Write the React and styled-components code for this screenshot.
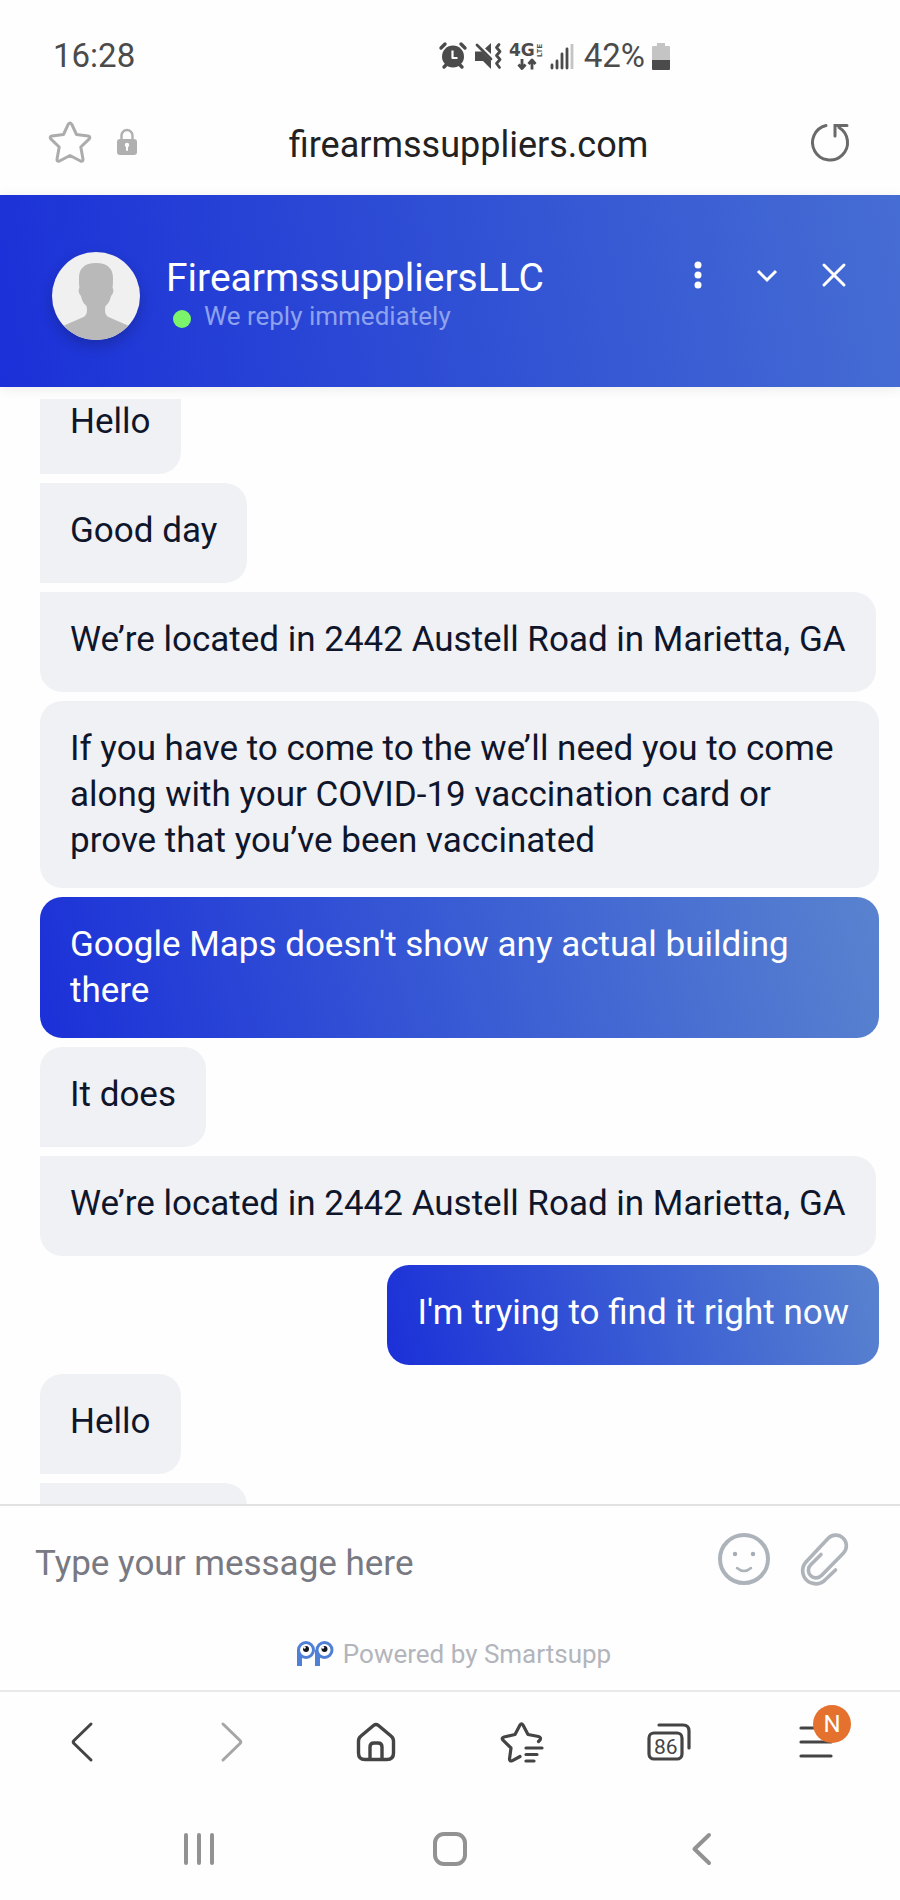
import { useLayoutEffect, useRef } from 'react'
import styled, { createGlobalStyle } from 'styled-components'

const GlobalStyle = createGlobalStyle`
  * {
    box-sizing: border-box;
  }
  body {
    margin: 0;
    background: #fefefe;
    font-family: Roboto, 'Liberation Sans', sans-serif;
  }
  button,
  input {
    font: inherit;
    color: inherit;
    border: 0;
    padding: 0;
    background: none;
    outline: none;
  }
`

const Phone = styled.div`
  display: flex;
  flex-direction: column;
  height: 100vh;
  overflow: hidden;
`

const StatusBar = styled.header`
  display: flex;
  justify-content: space-between;
  align-items: center;
  height: 92px;
  padding: 20px 230px 0 53px;
  color: #4b4b4b;
  font-size: 33px;
  line-height: 40px;
`
const StatusIcons = styled.div`
  display: flex;
  align-items: center;
  gap: 7px;
`
const Battery = styled.span`
  padding-left: 3px;
`

const AddressBar = styled.div`
  display: flex;
  align-items: center;
  height: 103px;
  padding: 0 40px 4px 49px;
`
const AddressButton = styled.button`
  display: flex;
  justify-content: center;
  align-items: center;
  width: ${({ $width }) => $width}px;
  height: 60px;
  flex: none;
`
const Lock = styled.span`
  display: flex;
  margin-left: 26px;
`
const Address = styled.input`
  flex: 1;
  min-width: 0;
  height: 60px;
  padding-top: 6px;
  text-align: center;
  color: #222222;
  font-size: 36px;
`

const Chat = styled.main`
  display: flex;
  flex-direction: column;
  flex: 1;
  min-height: 0;
`
const ChatHeader = styled.section`
  display: flex;
  height: 192px;
  flex: none;
  padding: 57px 41px 0 52px;
  background: linear-gradient(80deg, #1b30d8 0%, #2f4fd4 50%, #466dd3 100%);
  box-shadow: 0 2px 12px rgba(0, 0, 0, 0.08);
  color: #ffffff;
`
const Avatar = styled.div`
  width: 88px;
  height: 88px;
  border-radius: 50%;
  overflow: hidden;
  background: #f0f0f0;
  box-shadow: 0 6px 14px rgba(0, 0, 0, 0.2);
`
const Agent = styled.div`
  flex: 1;
  padding: 1px 0 0 26px;
`
const AgentName = styled.h1`
  margin: 0;
  font-size: 39px;
  font-weight: 400;
  line-height: 50px;
`
const AgentStatus = styled.p`
  display: flex;
  align-items: center;
  gap: 13px;
  margin: 0;
  padding-left: 7px;
  color: #8ea2ee;
  font-size: 26px;
  line-height: 26px;
`
const Online = styled.span`
  width: 18px;
  height: 18px;
  margin-top: 6px;
  border-radius: 50%;
  background: #7bf46c;
`
const ChatActions = styled.div`
  display: flex;
  gap: 17px;
`
const ChatAction = styled.button`
  display: flex;
  justify-content: center;
  align-items: center;
  width: 51px;
  height: 46px;
`

const Messages = styled.ol`
  display: flex;
  flex-direction: column;
  align-items: flex-start;
  gap: 9px;
  flex: 1;
  min-height: 0;
  margin: 12px 0 0;
  padding: 0 21px 0 40px;
  list-style: none;
  overflow-y: auto;
  scrollbar-width: none;
`
const Message = styled.li`
  flex: none;
  align-self: ${({ $mine }) => ($mine ? 'flex-end' : 'flex-start')};
  max-width: 100%;
  min-height: 100px;
  padding: 25px 30px 24px;
  border-radius: ${({ $joinTop, $joinBottom }) =>
    `${$joinTop ? 0 : 22}px 22px 22px ${$joinBottom ? 0 : 22}px`};
  background: ${({ $mine }) =>
    $mine
      ? 'linear-gradient(74deg, #1b30d8 0%, #395bd4 50%, #5983cf 100%)'
      : '#f0f1f5'};
  color: ${({ $mine }) => ($mine ? '#ffffff' : '#0f162b')};
  font-size: 35px;
  line-height: 46px;
`

const Composer = styled.form`
  display: flex;
  align-items: center;
  height: 110px;
  flex: none;
  padding: 0 36px 0 35px;
  border-top: 2px solid #e2e2e2;
`
const MessageInput = styled.input`
  flex: 1;
  min-width: 0;
  height: 60px;
  padding-top: 6px;
  color: #0f162b;
  font-size: 35px;
  &::placeholder {
    color: #787982;
    opacity: 1;
  }
`
const ComposerButton = styled.button`
  display: flex;
  justify-content: center;
  align-items: center;
  width: 80px;
  height: 100px;
  padding-bottom: 2px;
`
const Powered = styled.a`
  display: flex;
  justify-content: center;
  align-items: center;
  gap: 10px;
  height: 76px;
  flex: none;
  padding: 4px 0 0 8px;
  color: #b3b5bc;
  font-size: 26px;
  line-height: 36px;
  text-decoration: none;
`

const BrowserNav = styled.nav`
  display: flex;
  justify-content: space-between;
  height: 108px;
  flex: none;
  padding: 0 54px 0 52px;
  border-top: 2px solid #e9e9e9;
`
const NavButton = styled.button`
  position: relative;
  display: flex;
  justify-content: center;
  align-items: center;
  width: 60px;
  height: 100px;
  color: ${({ disabled }) => (disabled ? '#a6a6a6' : '#444444')};
`
const TabCount = styled.span`
  position: absolute;
  left: 9px;
  top: 42px;
  width: 35px;
  font-size: 21px;
  line-height: 26px;
  text-align: center;
`
const Badge = styled.span`
  position: absolute;
  left: 27px;
  top: 13px;
  width: 38px;
  height: 38px;
  border-radius: 50%;
  background: #e4722e;
  color: #ffffff;
  font-size: 24px;
  line-height: 39px;
  text-align: center;
`
const SystemNav = styled.nav`
  display: grid;
  grid-template-columns: repeat(3, 1fr);
  height: 102px;
  flex: none;
  padding: 0 73px;
`
const SystemButton = styled.button`
  display: flex;
  justify-content: center;
  align-items: center;
  color: #929292;
`

const Drawing = styled.svg`
  display: block;
  flex: none;
  overflow: visible;
`

function Icon({ w, h, ...rest }) {
  return (
    <Drawing
      width={w}
      height={h}
      viewBox={`0 0 ${w} ${h}`}
      fill="none"
      stroke="currentColor"
      strokeLinecap="round"
      strokeLinejoin="round"
      aria-hidden="true"
      {...rest}
    />
  )
}

const messages = [
  { text: 'Hello', joinBottom: true },
  { text: 'Good day', joinTop: true, joinBottom: true },
  { text: 'We’re located in 2442 Austell Road in Marietta, GA', joinTop: true },
  {
    text: 'If you have to come to the we’ll need you to come along with your COVID-19 vaccination card or prove that you’ve been vaccinated',
  },
  { text: "Google Maps doesn't show any actual building there", mine: true },
  { text: 'It does', joinBottom: true },
  { text: 'We’re located in 2442 Austell Road in Marietta, GA', joinTop: true },
  { text: "I'm trying to find it right now", mine: true },
  { text: 'Hello', joinBottom: true },
  { text: 'Good day', joinTop: true, joinBottom: true },
]

function Status() {
  return (
    <StatusBar>
      <time>16:28</time>
      <StatusIcons>
        {/* alarm */}
        <Icon w={28} h={28} strokeWidth="3.4">
          <path d="M2 6 6 2M22 2l4 4M5 25l4-4M23 25l-4-4" />
          <circle cx="14" cy="14.5" r="11" fill="currentColor" stroke="none" />
          <path
            d="M13.5 8.5v7.5h5"
            stroke="#fefefe"
            strokeWidth="2.2"
            strokeLinecap="butt"
          />
        </Icon>
        {/* muted with vibration */}
        <Icon w={28} h={28} strokeWidth="2.8">
          <path
            d="M1 9.500h7l9 9V27l-8-8H1zM11 6.500l6-5.500v11z"
            fill="currentColor"
            stroke="none"
          />
          <path d="M3 3l14 14" />
          <path d="M25 2.500l-2.500 3 3.500 4-3.500 4 3.500 4-3.500 4 3 4" />
        </Icon>
        <Icon w={34} h={28} strokeWidth="2.8" strokeLinecap="butt">
          <text
            x="0"
            y="14"
            fill="currentColor"
            stroke="none"
            fontFamily="DejaVu Sans"
            fontWeight="700"
            fontSize="17"
          >
            4G
          </text>
          <text
            transform="translate(33 15) rotate(-90)"
            fill="currentColor"
            stroke="none"
            fontFamily="Roboto"
            fontWeight="700"
            fontSize="8"
          >
            LTE
          </text>
          <path d="M13 17v9M9.500 22.500l3.500 4 3.500-4M23 27.500v-9M19.500 22l3.500-4 3.500 4" />
        </Icon>
        <Icon w={24} h={28} strokeWidth="2.8">
          <path d="M2 23v3M7 19v7M12 12v14M17 7v19" />
          <path d="M22 2v25" stroke="#c4c4c4" strokeLinecap="butt" />
        </Icon>
        <Battery>42%</Battery>
        <Icon w={18} h={28} stroke="none">
          <path
            d="M5 1h8v3h4a1 1 0 0 1 1 1v13H0V5a1 1 0 0 1 1-1h4z"
            fill="#c4c4c4"
          />
          <path d="M0 18h18v9a1 1 0 0 1-1 1H1a1 1 0 0 1-1-1z" fill="#4b4b4b" />
        </Icon>
      </StatusIcons>
    </StatusBar>
  )
}

function UrlBar() {
  return (
    <AddressBar>
      <AddressButton $width={42} aria-label="Bookmark this page">
        <Icon w={42} h={42} stroke="#acacac" strokeWidth="3">
          <path d="M19.300 3.200q1.700-2.600 3.400 0L27.500 13.500 39 15q3 .8 1 3.200L31.800 26 34 38.200q.2 2.800-2.500 1.800L21 34.500 10.500 40q-2.700 1-2.500-1.800L10.200 26 2 18.200Q0 15.800 3 15l11.500-1.500z" />
        </Icon>
      </AddressButton>
      <Lock>
        <Icon w={20} h={28} stroke="#b0b0b0" strokeWidth="2.4">
          <path d="M4.500 12V7.500a5.500 5.500 0 0 1 11 0V12" />
          <rect width="20" height="16" y="11" rx="3" fill="#b0b0b0" stroke="none" />
          <circle cx="10" cy="17" r="2.200" fill="#fefefe" stroke="none" />
          <path d="M10 17v5" stroke="#fefefe" strokeWidth="2" />
        </Icon>
      </Lock>
      <Address aria-label="Address" defaultValue="firearmssuppliers.com" />
      <AddressButton $width={60} aria-label="Reload">
        <Icon w={38} h={38} stroke="#6a6a6a" strokeWidth="3">
          <path d="M15 2.500A17.500 17.500 0 1 0 28 4.500" />
          <path d="M24 13V2.500h12" strokeLinejoin="miter" />
        </Icon>
      </AddressButton>
    </AddressBar>
  )
}

function ChatTop() {
  return (
    <ChatHeader>
      <Avatar>
        <Icon w={88} h={88} stroke="none">
          <path
            d="M44 11c-12 0-17 6-17 15 0 4 0 7 .5 10-1.500 1-1 6 1.500 8 1 5 3 8 5.500 10 1 5 .5 9-3 11L11 74v14h66V74L56.500 65c-3.500-2-4-6-3-11 2.500-2 4.500-5 5.500-10 2.500-2 3-7 1.500-8 .5-3 .5-6 .5-10 0-9-5-15-17-15z"
            fill="#b9b9b9"
          />
        </Icon>
      </Avatar>
      <Agent>
        <AgentName>FirearmssuppliersLLC</AgentName>
        <AgentStatus>
          <Online />
          We reply immediately
        </AgentStatus>
      </Agent>
      <ChatActions>
        <ChatAction aria-label="Options">
          <Icon w={8} h={28} fill="currentColor" stroke="none">
            <circle cx="4" cy="4" r="3.500" />
            <circle cx="4" cy="14" r="3.500" />
            <circle cx="4" cy="24" r="3.500" />
          </Icon>
        </ChatAction>
        <ChatAction aria-label="Minimize">
          <Icon w={18} h={12} strokeWidth="3" strokeLinecap="butt">
            <path d="M1 2l9 9 9-9" strokeLinejoin="miter" />
          </Icon>
        </ChatAction>
        <ChatAction aria-label="Close">
          <Icon w={24} h={24} strokeWidth="3">
            <path d="M2 2l20 20M22 2 2 22" />
          </Icon>
        </ChatAction>
      </ChatActions>
    </ChatHeader>
  )
}

function MessageList() {
  const list = useRef(null)

  useLayoutEffect(() => {
    list.current.scrollTop = 25
  }, [])

  return (
    <Messages ref={list}>
      {messages.map((m, i) => (
        <Message
          key={i}
          $mine={m.mine}
          $joinTop={m.joinTop}
          $joinBottom={m.joinBottom}
        >
          {m.text}
        </Message>
      ))}
    </Messages>
  )
}

function ChatFooter() {
  return (
    <>
      <Composer onSubmit={(e) => e.preventDefault()}>
        <MessageInput
          aria-label="Message"
          placeholder="Type your message here"
        />
        <ComposerButton type="button" aria-label="Emoji">
          <Icon w={52} h={52} stroke="#acb3ba" strokeWidth="4">
            <circle cx="26" cy="26" r="24" />
            <circle cx="17" cy="21" r="2.200" fill="#a5adb5" stroke="none" />
            <circle cx="35" cy="21" r="2.200" fill="#a5adb5" stroke="none" />
            <path d="M19 35q7 6 14 0" strokeWidth="2.500" />
          </Icon>
        </ComposerButton>
        <ComposerButton type="button" aria-label="Attach a file">
          <Icon w={48} h={52} stroke="#aeb4ba" strokeWidth="3.600">
            <path d="M35.500 37 25.500 46.500a13 13 0 0 1-19.500-17.500L28 5.500a10.500 10.500 0 0 1 15.500 14.500L21.500 42.500a7.600 7.600 0 0 1-11-10.500l10.500-10.500" />
          </Icon>
        </ComposerButton>
      </Composer>
      <Powered href="#smartsupp">
        <Icon w={36} h={26} stroke="#4f7fd6" strokeWidth="3">
          <path d="M2.500 9v16M20.500 9v16" strokeWidth="5" strokeLinecap="butt" />
          <circle cx="9" cy="9" r="7.500" fill="#ffffff" />
          <circle cx="27.500" cy="9" r="7.500" fill="#ffffff" />
          <circle cx="9" cy="8" r="3" fill="#10151f" stroke="none" />
          <circle cx="27.500" cy="8" r="3" fill="#10151f" stroke="none" />
          <circle cx="7.500" cy="6.500" r="1.200" fill="#ffffff" stroke="none" />
          <circle cx="26" cy="6.500" r="1.200" fill="#ffffff" stroke="none" />
        </Icon>
        Powered by Smartsupp
      </Powered>
    </>
  )
}

export default function App() {
  return (
    <Phone>
      <GlobalStyle />
      <Status />
      <UrlBar />
      <Chat>
        <ChatTop />
        <MessageList />
        <ChatFooter />
      </Chat>
      <BrowserNav>
        <NavButton aria-label="Back">
          <Icon w={22} h={40} strokeWidth="3">
            <path d="M20 2 3 18.500q-1.500 1.500 0 3L20 38" />
          </Icon>
        </NavButton>
        <NavButton aria-label="Forward" disabled>
          <Icon w={16} h={40} strokeWidth="3">
            <path d="M2 2l17 16.500q1.500 1.500 0 3L2 38" />
          </Icon>
        </NavButton>
        <NavButton aria-label="Home">
          <Icon w={38} h={38} strokeWidth="3.400">
            <path d="M16.500 2.500q2.500-2 5 0L34 13q2.500 2 2.500 5v12q0 6.500-6.500 6.500H8q-6.500 0-6.500-6.500V18q0-3 2.500-5z" />
            <path d="M13 36V24q0-4 4-4h4q4 0 4 4v12" />
          </Icon>
        </NavButton>
        <NavButton aria-label="Bookmarks">
          <Icon w={42} h={40} strokeWidth="3.200">
            <path d="M37.500 19.500l1.500-1.500q1.500-2.500-1.500-3.500L27 12.500 22 3q-1.500-2.500-3 0L14 12.500 3 15q-3 .8-1 3.200L10 26 8.500 37q0 2.500 2.500 1.800l8-4.300" />
            <path d="M25 26h16M25 32.500h11M25 39h8" />
          </Icon>
        </NavButton>
        <NavButton aria-label="86 open tabs">
          <Icon w={44} h={38} strokeWidth="3.200">
            <rect x="2" y="10" width="33" height="26" rx="5" />
            <path d="M12 2h24q6 0 6 6v17" />
          </Icon>
          <TabCount>86</TabCount>
        </NavButton>
        <NavButton aria-label="Menu">
          <Icon w={34} h={32} strokeWidth="3.200">
            <path d="M2 2h30M2 16h30M2 30h30" />
          </Icon>
          <Badge>N</Badge>
        </NavButton>
      </BrowserNav>
      <SystemNav>
        <SystemButton aria-label="Recent apps">
          <Icon w={30} h={32} strokeWidth="4">
            <path d="M2 2v28M15 2v28M28 2v28" />
          </Icon>
        </SystemButton>
        <SystemButton aria-label="Home screen">
          <Icon w={34} h={34} strokeWidth="4">
            <rect x="2" y="2" width="30" height="30" rx="9" />
          </Icon>
        </SystemButton>
        <SystemButton aria-label="Go back">
          <Icon w={19} h={32} strokeWidth="4">
            <path d="M17 2 2.500 16 17 30" />
          </Icon>
        </SystemButton>
      </SystemNav>
    </Phone>
  )
}
